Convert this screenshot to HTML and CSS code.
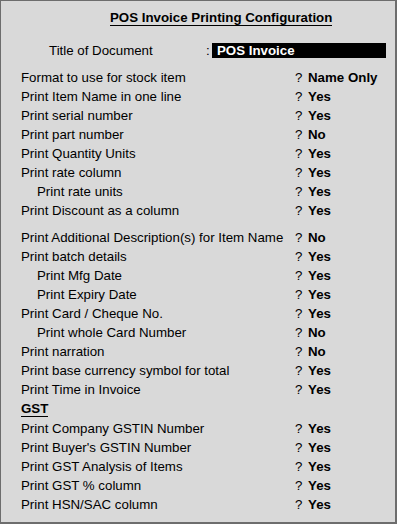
FILE: index.html
```html
<!DOCTYPE html>
<html>
<head>
<meta charset="utf-8">
<link rel="stylesheet" href="styles.css">
</head>
<body>
<div class="panel">
  <div class="title"><span>POS Invoice Printing Configuration</span></div>
  <div class="doc-row">
    <span class="doc-label">Title of Document</span>
    <span class="colon">:</span>
    <span class="doc-value">POS Invoice</span>
  </div>
  <div class="rows">
    <div class="row"><span class="label">Format to use for stock item</span><span class="q">?</span><span class="val">Name Only</span></div>
    <div class="row"><span class="label">Print Item Name in one line</span><span class="q">?</span><span class="val">Yes</span></div>
    <div class="row"><span class="label">Print serial number</span><span class="q">?</span><span class="val">Yes</span></div>
    <div class="row"><span class="label">Print part number</span><span class="q">?</span><span class="val">No</span></div>
    <div class="row"><span class="label">Print Quantity Units</span><span class="q">?</span><span class="val">Yes</span></div>
    <div class="row"><span class="label">Print rate column</span><span class="q">?</span><span class="val">Yes</span></div>
    <div class="row"><span class="label sub">Print rate units</span><span class="q">?</span><span class="val">Yes</span></div>
    <div class="row"><span class="label">Print Discount as a column</span><span class="q">?</span><span class="val">Yes</span></div>
    <div class="spacer"></div>
    <div class="row"><span class="label">Print Additional Description(s) for Item Name</span><span class="q">?</span><span class="val">No</span></div>
    <div class="row"><span class="label">Print batch details</span><span class="q">?</span><span class="val">Yes</span></div>
    <div class="row"><span class="label sub">Print Mfg Date</span><span class="q">?</span><span class="val">Yes</span></div>
    <div class="row"><span class="label sub">Print Expiry Date</span><span class="q">?</span><span class="val">Yes</span></div>
    <div class="row"><span class="label">Print Card / Cheque No.</span><span class="q">?</span><span class="val">Yes</span></div>
    <div class="row"><span class="label sub">Print whole Card Number</span><span class="q">?</span><span class="val">No</span></div>
    <div class="row"><span class="label">Print narration</span><span class="q">?</span><span class="val">No</span></div>
    <div class="row"><span class="label">Print base currency symbol for total</span><span class="q">?</span><span class="val">Yes</span></div>
    <div class="row"><span class="label">Print Time in Invoice</span><span class="q">?</span><span class="val">Yes</span></div>
    <div class="section"><span>GST</span></div>
    <div class="row"><span class="label">Print Company GSTIN Number</span><span class="q">?</span><span class="val">Yes</span></div>
    <div class="row"><span class="label">Print Buyer's GSTIN Number</span><span class="q">?</span><span class="val">Yes</span></div>
    <div class="row"><span class="label">Print GST Analysis of Items</span><span class="q">?</span><span class="val">Yes</span></div>
    <div class="row"><span class="label">Print GST % column</span><span class="q">?</span><span class="val">Yes</span></div>
    <div class="row"><span class="label">Print HSN/SAC column</span><span class="q">?</span><span class="val">Yes</span></div>
  </div>
</div>
</body>
</html>
```
FILE: styles.css
```css
html, body {
  margin: 0;
  padding: 0;
  background: #d9d9d9;
}
.panel {
  box-sizing: border-box;
  width: 397px;
  height: 524px;
  background: #d9d9d9;
  border: 1px solid #6d6d6d;
  border-right-width: 2px;
  border-bottom-width: 2px;
  font-family: "Liberation Sans", Arial, sans-serif;
  font-size: 13.3px;
  color: #000;
  padding-top: 7px;
}
.title {
  padding-left: 109px;
  line-height: 19px;
  font-weight: bold;
}
.title span {
  border-bottom: 1px solid #000;
  padding-bottom: 0;
}
.doc-row {
  display: flex;
  align-items: center;
  margin-top: 16px;
  height: 15px;
  line-height: 15px;
}
.doc-label {
  padding-left: 48px;
  width: 157px;
}
.colon {
  width: 6px;
}
.doc-value {
  background: #000;
  color: #fff;
  font-weight: bold;
  width: 169px;
  padding-left: 5px;
  height: 15px;
}
.rows {
  margin-top: 10px;
}
.row {
  display: flex;
  line-height: 19px;
  height: 19px;
}
.label {
  width: 274px;
  padding-left: 20px;
  white-space: nowrap;
}
.label.sub {
  width: 258px;
  padding-left: 36px;
}
.q {
  width: 13px;
}
.val {
  font-weight: bold;
}
.spacer {
  height: 8px;
}
.section {
  padding-left: 20px;
  line-height: 19px;
  height: 20px;
  font-weight: bold;
}
.section span {
  border-bottom: 1px solid #000;
}
```
